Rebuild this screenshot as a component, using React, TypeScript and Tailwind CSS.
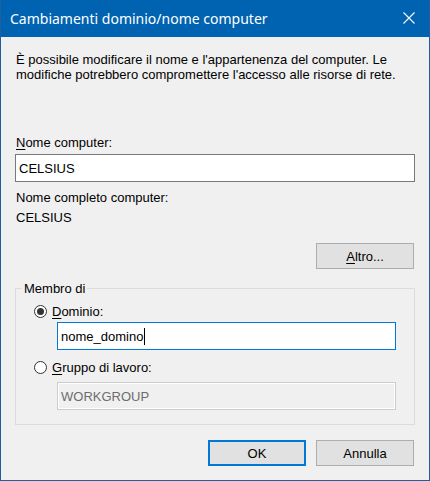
import React from 'react';

const Radio: React.FC<{ checked?: boolean }> = ({ checked }) => (
  <span className="flex h-[13px] w-[13px] items-center justify-center rounded-full border border-[#333333] bg-white">
    {checked && <span className="h-[7px] w-[7px] rounded-full bg-[#333333]" />}
  </span>
);

const WinButton: React.FC<{ focused?: boolean; children: React.ReactNode }> = ({ focused, children }) => (
  <button
    className={
      focused
        ? 'flex h-[26px] w-[98px] items-center justify-center border-2 border-[#0078d7] bg-[#e1e1e1] text-black'
        : 'flex h-[26px] w-[98px] items-center justify-center border border-[#adadad] bg-[#e1e1e1] text-black'
    }
  >
    {children}
  </button>
);

export default function App() {
  return (
    <div
      className="flex h-[481px] w-[430px] flex-col border-x border-b border-[#1f5f9f] bg-[#f0f0f0] text-[13px] leading-[15px] text-black"
      style={{ fontFamily: '"Liberation Sans", Arial, sans-serif' }}
    >
      {/* title bar */}
      <div className="flex h-[37px] shrink-0 items-center justify-between bg-[#0063b1] pl-[9px] pr-[14px] text-white">
        <span className="text-[14px]" style={{ fontFamily: '"Noto Sans", sans-serif' }}>
          Cambiamenti dominio/nome computer
        </span>
        <svg width="12" height="12" viewBox="0 0 12 12" className="mb-px">
          <path d="M0.5 0.5 L11.5 11.5 M11.5 0.5 L0.5 11.5" stroke="white" strokeWidth="1.1" />
        </svg>
      </div>

      <div className="flex flex-col px-[14px] pt-[15px]">
        <p className="pl-px">
          È possibile modificare il nome e l'appartenenza del computer. Le
          <br />
          modifiche potrebbero compromettere l'accesso alle risorse di rete.
        </p>

        <label className="mt-[53px] pl-px">
          <u className="underline-offset-2">N</u>ome computer:
        </label>
        <div className="mt-[4px] flex h-[28px] items-center border border-[#7a7a7a] bg-white pl-[3px]">CELSIUS</div>

        <span className="mt-[8px] pl-px">Nome completo computer:</span>
        <span className="mt-[5px] pl-px">CELSIUS</span>

        <div className="mt-[18px] flex justify-end pr-px">
          <WinButton>
            <span>
              <u className="underline-offset-2">A</u>ltro...
            </span>
          </WinButton>
        </div>

        <fieldset className="mt-[12px] w-[400px] border border-[#dcdcdc] pb-[14px]">
          <legend className="ml-[6px] px-[2px]">Membro di</legend>

          <div className="flex flex-col pl-[18px]">
            <div className="mt-[8px] flex items-center gap-[5px]">
              <Radio checked />
              <span>
                <u className="underline-offset-2">D</u>ominio:
              </span>
            </div>
            <div className="ml-[23px] mt-[3px] flex h-[28px] w-[339px] items-center border border-[#0078d7] bg-white pl-[3px]">
              nome_domino
              <span className="ml-px h-[17px] w-px bg-black" />
            </div>

            <div className="mt-[10px] flex items-center gap-[5px]">
              <Radio />
              <span>
                <u className="underline-offset-2">G</u>ruppo di lavoro:
              </span>
            </div>
            <div className="ml-[23px] mt-[7px] flex h-[28px] w-[339px] items-center border border-[#cccccc] bg-[#f0f0f0] pl-[3px] text-[#6d6d6d] shadow-[inset_0_0_0_1px_#ffffff]">
              WORKGROUP
            </div>
          </div>
        </fieldset>

        <div className="mt-[15px] flex justify-end gap-[10px] pr-px">
          <WinButton focused>OK</WinButton>
          <WinButton>Annulla</WinButton>
        </div>
      </div>
    </div>
  );
}
